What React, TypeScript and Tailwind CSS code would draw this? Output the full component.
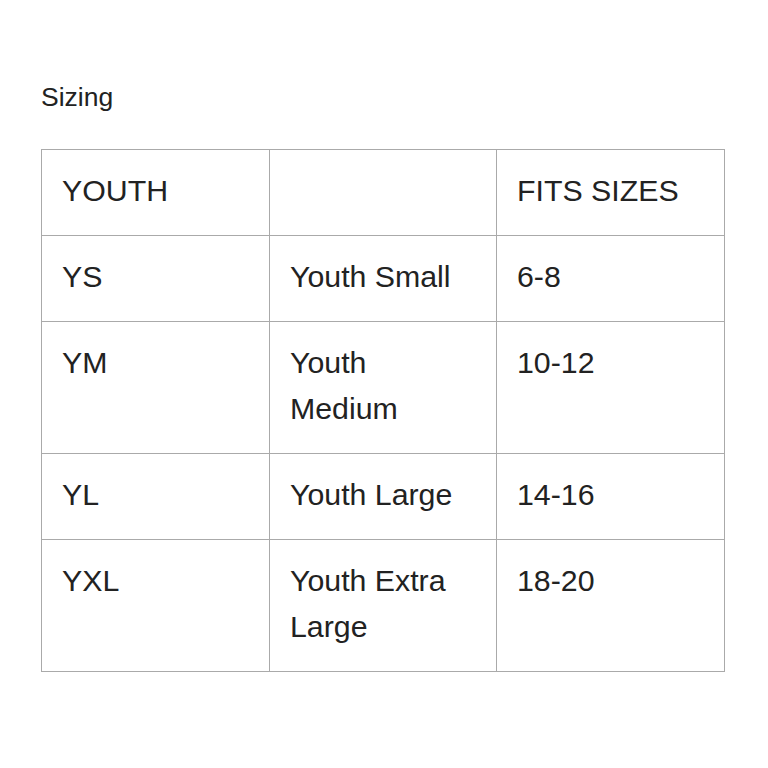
const rows: [string, string, string][] = [
  ['YOUTH', '', 'FITS SIZES'],
  ['YS', 'Youth Small', '6-8'],
  ['YM', 'Youth Medium', '10-12'],
  ['YL', 'Youth Large', '14-16'],
  ['YXL', 'Youth Extra Large', '18-20'],
]

export default function App() {
  return (
    <div
      className="min-h-screen bg-white pl-[41px] pt-[80px] text-[#222]"
      style={{ fontFamily: '"Liberation Sans", Arial, sans-serif' }}
    >
      <p className="text-[26.5px] leading-[34px]">Sizing</p>
      <table className="mt-[35px] w-[683px] table-fixed border-collapse text-[30.3px] leading-[46px]">
        <colgroup>
          <col className="w-[228px]" />
          <col className="w-[227px]" />
          <col className="w-[228px]" />
        </colgroup>
        <tbody>
          {rows.map((r, i) => (
            <tr key={i}>
              {r.map((c, j) => (
                <td
                  key={j}
                  className="border border-[#aaa] px-[20px] pt-[18px] pb-[21px] align-top"
                >
                  {c}
                </td>
              ))}
            </tr>
          ))}
        </tbody>
      </table>
    </div>
  )
}
